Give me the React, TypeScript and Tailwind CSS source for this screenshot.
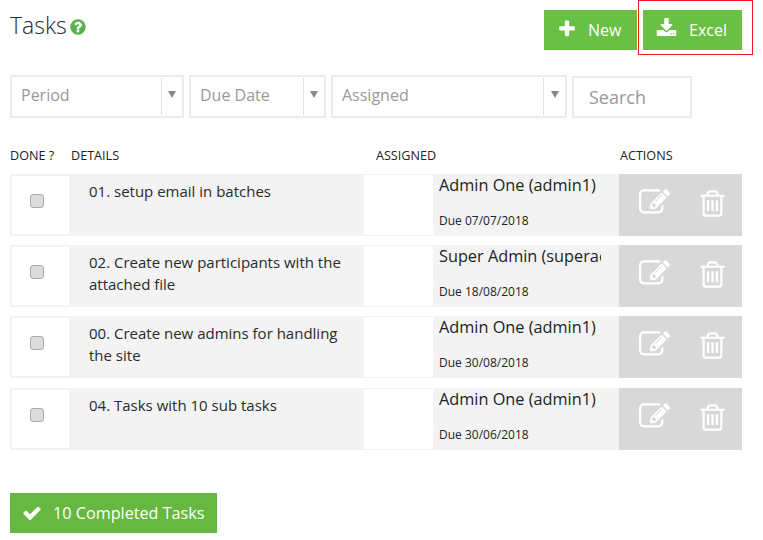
type IconProps = { d: string; className: string };

function FaGlyph({ d, className }: IconProps) {
  return (
    <svg viewBox="0 0 1792 1792" fill="currentColor" className={className}>
      <path d={d} />
    </svg>
  );
}

// font awesome 4 shapes, the newer sets in react-icons are drawn differently
const plus = "M1600 736v192q0 40-28 68t-68 28h-416v416q0 40-28 68t-68 28h-192q-40 0-68-28t-28-68v-416h-416q-40 0-68-28t-28-68v-192q0-40 28-68t68-28h416v-416q0-40 28-68t68-28h192q40 0 68 28t28 68v416h416q40 0 68 28t28 68z";
const download = "M1344 1344q0-26-19-45t-45-19-45 19-19 45 19 45 45 19 45-19 19-45zm256 0q0-26-19-45t-45-19-45 19-19 45 19 45 45 19 45-19 19-45zm128-224v320q0 40-28 68t-68 28h-1472q-40 0-68-28t-28-68v-320q0-40 28-68t68-28h465l135 136q58 56 136 56t136-56l136-136h464q40 0 68 28t28 68zm-325-569q17 41-14 70l-448 448q-18 19-45 19t-45-19l-448-448q-31-29-14-70 17-39 59-39h256v-448q0-26 19-45t45-19h256q26 0 45 19t19 45v448h256q42 0 59 39z";
const check = "M1671 566q0 40-28 68l-724 724-136 136q-28 28-68 28t-68-28l-136-136-362-362q-28-28-28-68t28-68l136-136q28-28 68-28t68 28l294 295 656-657q28-28 68-28t68 28l136 136q28 28 28 68z";
const question = "M1024 1376v-192q0-14-9-23t-23-9h-192q-14 0-23 9t-9 23v192q0 14 9 23t23 9h192q14 0 23-9t9-23zm256-672q0-88-55.5-163t-138.500-116-170-41q-243 0-371 213-15 24 8 42l132 100q7 6 19 6 16 0 25-12 53-68 86-92 34-24 86-24 48 0 85.5 26t37.5 59q0 38-20 61t-68 45q-63 28-115.500 86.500t-52.500 125.500v36q0 14 9 23t23 9h192q14 0 23-9t9-23q0-19 21.500-49.500t54.500-49.500q32-18 49-28.500t46-35 44.500-48 28-60.500 12.500-81zm384 192q0 209-103 385.500t-279.500 279.500-385.500 103-385.500-103-279.500-279.500-103-385.500 103-385.500 279.500-279.500 385.500-103 385.500 103 279.500 279.500 103 385.500z";
const edit = "M888 1184l116-116-152-152-116 116v56h96v96h56zm440-720q-16-16-33 1l-350 350q-17 17-1 33t33-1l350-350q17-17 1-33zm80 594v190q0 119-84.500 203.500t-203.500 84.500h-832q-119 0-203.500-84.500t-84.500-203.500v-832q0-119 84.500-203.500t203.500-84.500h832q63 0 117 25 15 7 18 23 3 17-9 29l-49 49q-14 14-32 8-23-6-45-6h-832q-66 0-113 47t-47 113v832q0 66 47 113t113 47h832q66 0 113-47t47-113v-126q0-13 9-22l64-64q15-15 35-7t20 29zm-96-738l288 288-672 672h-288v-288zm444 132l-92 92-288-288 92-92q28-28 68-28t68 28l152 152q28 28 28 68t-28 68z";
const trash = "M704 736v576q0 14-9 23t-23 9h-64q-14 0-23-9t-9-23v-576q0-14 9-23t23-9h64q14 0 23 9t9 23zm256 0v576q0 14-9 23t-23 9h-64q-14 0-23-9t-9-23v-576q0-14 9-23t23-9h64q14 0 23 9t9 23zm256 0v576q0 14-9 23t-23 9h-64q-14 0-23-9t-9-23v-576q0-14 9-23t23-9h64q14 0 23 9t9 23zm128 724v-948h-896v948q0 22 7 40.5t14.5 27 10.5 8.5h832q3 0 10.5-8.5t14.5-27 7-40.5zm-672-1076h448l-48-117q-7-9-17-11h-317q-10 2-17 11zm928 32v64q0 14-9 23t-23 9h-96v948q0 83-47 143.5t-113 60.5h-832q-66 0-113-47.5t-47-130.5v-974h-96q-14 0-23-9t-9-23v-64q0-14 9-23t23-9h309l70-167q15-37 54-63t79-26h320q40 0 79 26t54 63l70 167h309q14 0 23 9t9 23z";

const tasks = [
  { title: "01. setup email in batches", who: "Admin One (admin1)", due: "Due 07/07/2018", gap: "mb-[9px]" },
  { title: "02. Create new participants with the attached file", who: "Super Admin (superadmin)", due: "Due 18/08/2018", gap: "mb-[9px]" },
  { title: "00. Create new admins for handling the site", who: "Admin One (admin1)", due: "Due 30/08/2018", gap: "mb-[10px]" },
  { title: "04. Tasks with 10 sub tasks", who: "Admin One (admin1)", due: "Due 30/06/2018", gap: "" },
];

function FilterSelect({ label, className, arrowWidth }: { label: string; className: string; arrowWidth: string }) {
  return (
    <div className={`flex h-[43px] border-2 border-[#ebebeb] ${className}`}>
      <div className="flex-1 pl-[9px] text-[16px] leading-[37px] text-[#999]">{label}</div>
      <div className={`my-px flex items-start justify-center border-l border-[#e0e0e0] pt-[13px] ${arrowWidth}`}>
        <span className="h-0 w-0 border-x-[4px] border-t-[7px] border-x-transparent border-t-[#888]" />
      </div>
    </div>
  );
}

export default function App() {
  return (
    <div className="relative h-[540px] w-[763px] overflow-hidden bg-white font-['Open_Sans',sans-serif] text-[#222]">
      <div className="absolute left-[638px] top-0 h-[55px] w-[115px] border border-[#ed1c24]" />

      <div className="flex items-start justify-between pl-[10px] pr-[21px] pt-[10px]">
        <div className="flex items-center gap-[2px]">
          <h1 className="text-[23px] font-light leading-[31px] text-[#1d2b36]">Tasks</h1>
          <FaGlyph d={question} className="mt-[3px] h-[18px] w-[18px] text-[#5cb050]" />
        </div>
        <div className="flex gap-[6px]">
          <button className="flex h-[40px] w-[93px] items-center gap-[11px] bg-[#6abf45] pl-[13px] text-[16px] text-white">
            <FaGlyph d={plus} className="mb-[3px] h-[20px] w-[20px]" />
            New
          </button>
          <button className="flex h-[40px] w-[99px] items-center gap-[12px] bg-[#6abf45] pl-[13px] text-[16px] text-white">
            <FaGlyph d={download} className="mb-[3px] h-[21px] w-[21px]" />
            Excel
          </button>
        </div>
      </div>

      <div className="mt-[25px] flex items-end gap-[5px] pl-[10px]">
        <FilterSelect label="Period" className="w-[174px]" arrowWidth="w-[21px]" />
        <FilterSelect label="Due Date" className="w-[137px]" arrowWidth="w-[21px]" />
        <FilterSelect label="Assigned" className="w-[236px]" arrowWidth="w-[22px]" />
        <div className="h-[42px] w-[120px] border-2 border-[#ebebeb] pl-[15px] text-[18px] leading-[38px] text-[#999]">Search</div>
      </div>

      <div className="mt-[29px] grid grid-cols-[61px_305px_244px_122px] pl-[10px] text-[12.6px] leading-[18px] text-[#222]">
        <span>DONE ?</span>
        <span>DETAILS</span>
        <span>ASSIGNED</span>
        <span>ACTIONS</span>
      </div>

      <div className="mt-[9px] pl-[10px]">
        {tasks.map((t) => (
          <div key={t.title} className={`grid h-[62px] w-[732px] grid-cols-[61px_293px_69px_186px_123px] ${t.gap}`}>
            <div className="border-2 border-[#f3f3f3] pl-[18px] pt-[18px]">
              <div className="h-[14px] w-[14px] rounded-[3px] border border-[#aaa] bg-[#dcdcdc]" />
            </div>
            <div className="bg-[#f3f3f3] pl-[18px] pr-[16px] pt-[6px] text-[15px] leading-[22px] text-[#2a2a2a]">{t.title}</div>
            <div className="border-y border-[#f3f3f3] bg-white" />
            <div className="bg-[#f3f3f3] pl-[6px] pr-[18px]">
              <div className="overflow-hidden whitespace-nowrap text-[16.3px] leading-[22px] text-[#222]">{t.who}</div>
              <div className="mt-[17px] text-[12px] leading-[16px] text-[#222]">{t.due}</div>
            </div>
            <div className="flex items-start gap-[27px] bg-[#d8d8d8] pl-[20px] pt-[12px] text-white">
              <FaGlyph d={edit} className="mt-[1px] h-[31px] w-[31px]" />
              <FaGlyph d={trash} className="mt-[2px] h-[31px] w-[31px]" />
            </div>
          </div>
        ))}
      </div>

      <button className="ml-[10px] mt-[43px] flex h-[40px] w-[207px] items-center gap-[11px] bg-[#66b840] pl-[12px] text-[16.2px] text-white">
        <FaGlyph d={check} className="h-[20px] w-[20px]" />
        10 Completed Tasks
      </button>
    </div>
  );
}
